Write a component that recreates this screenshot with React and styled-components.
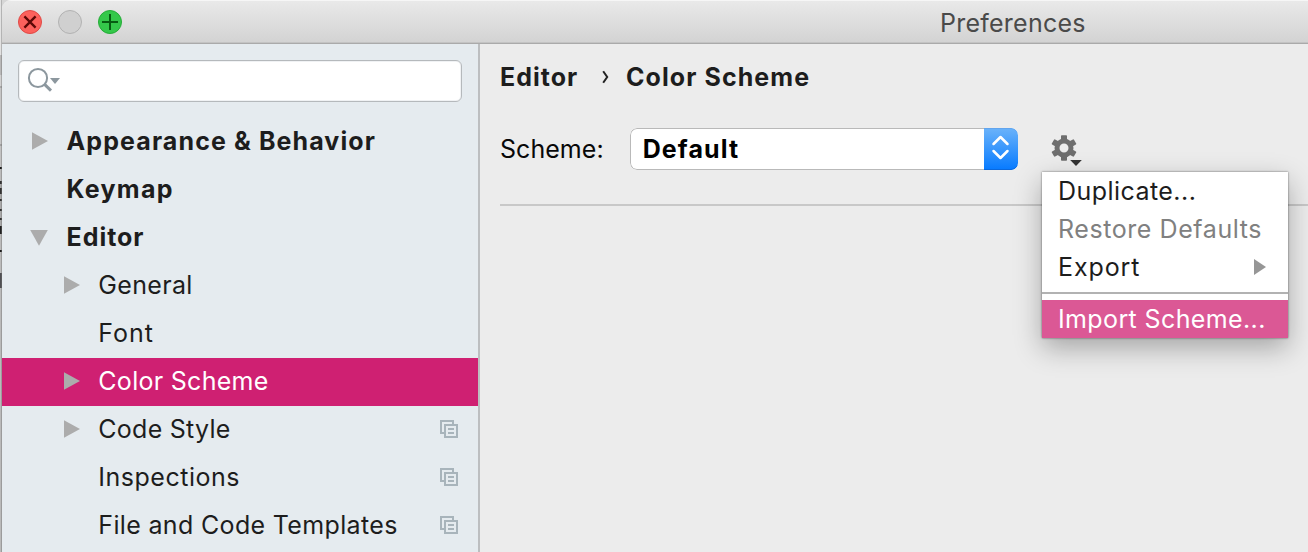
import React from "react";
import styled, { createGlobalStyle, css } from "styled-components";

const GlobalStyle = createGlobalStyle`
  * { box-sizing: border-box; }
  body {
    margin: 0;
    overflow: hidden;
    background: #ececec;
    font-family: Inter, "Liberation Sans", sans-serif;
    font-size: 25px;
    line-height: 30px;
    color: #1d1d1d;
  }
`;

const Screen = styled.div`
  display: flex;
  width: 1308px;
  height: 552px;
  overflow: hidden;
  background: #d6d6d6;
`;

/* Sliver of the window that lies behind the dialog. */
const BackgroundEdge = styled.div`
  flex: none;
  width: 2px;
  background:
    linear-gradient(90deg, transparent 50%, rgba(110, 110, 110, 0.4) 50%),
    linear-gradient(
      #e2e2e2 0 55px, #b9b9b9 55px 75px, #d2d2d2 75px 86px, #aaa 86px 88px,
      #c6c6c6 88px 144px, #a2a2a2 144px 146px, #c2c2c2 146px 167px,
      #1c1c1c 167px 169px, #bbb 169px 181px, #333 181px 184px, #aaa 184px 188px,
      #333 188px 194px, #aaa 194px 199px, #333 199px 201px, #aaa 201px 209px,
      #333 209px 211px, #aaa 211px 218px, #333 218px 220px, #aaa 220px 226px,
      #222 226px 234px, #bbb 234px 250px, #1c1c1c 250px 252px, #bbb 252px 273px,
      #505053 273px 288px, #bababa 288px
    );
`;

const Window = styled.div`
  flex: 1;
  min-width: 0;
  display: flex;
  flex-direction: column;
  background: #ececec;
  border-top-left-radius: 9px;
`;

const TitleBar = styled.header`
  flex: none;
  display: flex;
  align-items: center;
  height: 44px;
  padding: 0 0 0 16px;
  border-bottom: 1px solid #aaa;
  border-top-left-radius: 9px;
  background: linear-gradient(#f6f6f6 0 1px, #e9e9e9 1px, #d3d3d3 42px, #c3c3c3 42px);
`;

const WindowControls = styled.div`
  display: flex;
  gap: 16px;
  width: 922px;
`;

const Light = styled.span`
  display: flex;
  width: 24px;
  height: 24px;
  border-radius: 50%;
  border: 1px solid ${(p) => p.$edge};
  background: ${(p) => p.$fill};
`;

const Title = styled.h1`
  margin: 0;
  padding-top: 2px;
  font-size: 25px;
  font-weight: 400;
  letter-spacing: 0.24px;
  color: #4a4a4a;
`;

const Body = styled.div`
  flex: 1;
  min-height: 0;
  display: flex;
`;

const Sidebar = styled.aside`
  flex: none;
  width: 478px;
  padding-top: 16px;
  border-right: 2px solid #bcbec0;
  background: #e5ebef;
  overflow: hidden;
`;

const SearchField = styled.div`
  display: flex;
  width: 444px;
  height: 42px;
  margin: 0 0 16px 16px;
  padding: 5px 8px;
  border: 1px solid #b5b9bc;
  border-radius: 6px;
  background: #fff;
  box-shadow: inset 0 0 0 1px #f0f2f4;
`;

const TreeRow = styled.div`
  display: flex;
  align-items: center;
  height: 48px;
  padding: 0 20px 2px ${(p) => (p.$child ? 62 : 30)}px;
  ${(p) =>
    p.$selected &&
    css`
      background: #cf2072;
      color: #fff;
    `}
`;

const ArrowSlot = styled.span`
  display: flex;
  flex: none;
  width: ${(p) => (p.$child ? 34.3 : 34.6)}px;
`;

const DownArrow = styled.svg`
  margin: 1px 0 0 -2px;
`;

const TreeLabel = styled.span`
  flex: 1;
  white-space: nowrap;
  font-weight: ${(p) => (p.$bold ? 700 : 400)};
  letter-spacing: ${(p) => p.$track}px;
`;

const Content = styled.main`
  flex: 1;
  min-width: 0;
  padding: 18px 0 0 20px;
`;

const Breadcrumb = styled.nav`
  display: flex;
  align-items: center;
  height: 30px;
  font-weight: 700;
  white-space: nowrap;
`;

const Crumb = styled.span`
  letter-spacing: ${(p) => p.$track}px;
`;

const CrumbArrow = styled.svg`
  margin: 0 17.4px 0 23.4px;
`;

const SchemeRow = styled.div`
  display: flex;
  align-items: center;
  height: 42px;
  margin-top: 36px;
`;

const SchemeLabel = styled.label`
  width: 130px;
  color: #080808;
  letter-spacing: 0.04px;
`;

const Select = styled.div`
  display: flex;
  width: 388px;
  height: 42px;
  border-radius: 7px;
  overflow: hidden;
  background: #fff;
`;

const SelectValue = styled.span`
  flex: 1;
  padding: 5px 0 0 11.7px;
  border: 1px solid #b9b9b9;
  border-right: 0;
  border-radius: 7px 0 0 7px;
  font-weight: 700;
  letter-spacing: 1.1px;
  color: #000;
`;

const Stepper = styled.span`
  display: flex;
  width: 34px;
  border-radius: 0 7px 7px 0;
  background: linear-gradient(#6bb3fa, #067aff);
  box-shadow: inset 0 1px #62a5ee, inset 0 -1px #0a68dd;
`;

const GearButton = styled.div`
  position: relative;
  display: flex;
  width: 34px;
  height: 34px;
  margin-left: 32px;
`;

const Menu = styled.div`
  position: absolute;
  z-index: 2;
  top: 40px;
  left: -8px;
  width: 246px;
  background: #fff;
  box-shadow: 0 0 2px rgba(0, 0, 0, 0.55), 0 10px 26px rgba(0, 0, 0, 0.3);
`;

const MenuItem = styled.div`
  display: flex;
  align-items: center;
  justify-content: space-between;
  height: 38px;
  padding: 0 22px 0 16px;
  white-space: nowrap;
  letter-spacing: ${(p) => p.$track}px;
  color: ${(p) => (p.$active ? "#fff" : p.$disabled ? "#808080" : "#1d1d1d")};
  background: ${(p) => (p.$active ? "#db5895" : "transparent")};
`;

const MenuSeparator = styled.div`
  height: 2px;
  margin: 6px 0;
  background: #b2b2b2;
`;

const Rule = styled.div`
  height: 2px;
  margin-top: 34px;
  background: #c8c8c8;
`;

const TREE = [
  { label: "Appearance & Behavior", arrow: "right", bold: true, track: 1.1 },
  { label: "Keymap", bold: true, track: 1.25 },
  { label: "Editor", arrow: "down", bold: true, track: 0.95 },
  { label: "General", arrow: "right", child: true, track: 0.33 },
  { label: "Font", child: true, track: 0.95 },
  { label: "Color Scheme", arrow: "right", child: true, selected: true, track: 0.29 },
  { label: "Code Style", arrow: "right", child: true, shared: true, track: 0.26 },
  { label: "Inspections", child: true, shared: true, track: 0.52 },
  { label: "File and Code Templates", child: true, shared: true, track: 0.34 },
];

function TreeArrow({ dir }) {
  if (dir === "right")
    return (
      <svg width="16" height="18" viewBox="0 0 16 18">
        <path d="M0 0.3L16 9L0 17.7Z" fill="#acacac" />
      </svg>
    );
  if (dir === "down")
    return (
      <DownArrow width="18" height="16" viewBox="0 0 18 16">
        <path d="M0.2 0H17.8L9 15.7Z" fill="#acacac" />
      </DownArrow>
    );
  return null;
}

function ProjectIcon() {
  return (
    <svg width="18" height="18" viewBox="0 0 18 18" fill="none" stroke="#a8b4bb" strokeWidth="2">
      <path d="M4 13H1V1H13V4M5 5H17V17H5ZM8 9H14M8 13H14" />
    </svg>
  );
}

export default function App() {
  return (
    <Screen>
      <GlobalStyle />
      <BackgroundEdge />
      <Window>
        <TitleBar>
          <WindowControls>
            <Light $fill="#fc615c" $edge="#e04945">
              <svg width="22" height="22" viewBox="0 0 22 22">
                <path d="M5.4 5.4L16.6 16.6M16.6 5.4L5.4 16.6" stroke="#5c0806" strokeWidth="2.3" />
              </svg>
            </Light>
            <Light $fill="#d0d0d0" $edge="#b2b2b2" />
            <Light $fill="#34c84a" $edge="#25ac38">
              <svg width="22" height="22" viewBox="0 0 22 22">
                <path d="M3 11H19M11 3V19" stroke="#075d12" strokeWidth="2" />
              </svg>
            </Light>
          </WindowControls>
          <Title>Preferences</Title>
        </TitleBar>
        <Body>
          <Sidebar>
            <SearchField>
              <svg width="36" height="30" viewBox="0 0 36 30">
                <circle cx="11" cy="12" r="9.1" fill="none" stroke="#8c979e" strokeWidth="2" />
                <path d="M17.6 18.4L24 24.6" stroke="#8c979e" strokeWidth="3" />
                <path d="M23 12H33L28 18Z" fill="#8c979e" />
              </svg>
            </SearchField>
            {TREE.map((n) => (
              <TreeRow key={n.label} $child={n.child} $selected={n.selected}>
                <ArrowSlot $child={n.child}>
                  <TreeArrow dir={n.arrow} />
                </ArrowSlot>
                <TreeLabel $bold={n.bold} $track={n.track}>
                  {n.label}
                </TreeLabel>
                {n.shared && <ProjectIcon />}
              </TreeRow>
            ))}
          </Sidebar>
          <Content>
            <Breadcrumb>
              <Crumb $track={1}>Editor</Crumb>
              <CrumbArrow width="7" height="14" viewBox="0 0 7 14">
                <path d="M1.2 1.2L5.2 7L1.2 12.8" fill="none" stroke="#222" strokeWidth="2" />
              </CrumbArrow>
              <Crumb $track={1.08}>Color Scheme</Crumb>
            </Breadcrumb>
            <SchemeRow>
              <SchemeLabel>Scheme:</SchemeLabel>
              <Select>
                <SelectValue>Default</SelectValue>
                <Stepper>
                  <svg width="34" height="42" viewBox="0 0 34 42">
                    <path
                      d="M9.5 16L16.5 9L23.5 16M9.5 23L16.5 30L23.5 23"
                      fill="none"
                      stroke="#fff"
                      strokeWidth="2.5"
                      strokeLinecap="round"
                      strokeLinejoin="round"
                    />
                  </svg>
                </Stepper>
              </Select>
              <GearButton>
                <svg width="34" height="34" viewBox="0 0 34 34">
                  <g fill="#6e6e6e">
                    {[0, 60, 120, 180, 240, 300].map((a) => (
                      <rect
                        key={a}
                        x="11"
                        y="3.2"
                        width="6"
                        height="6"
                        rx="0.8"
                        transform={`rotate(${a} 14 16)`}
                      />
                    ))}
                  </g>
                  <circle cx="14" cy="16" r="7" fill="none" stroke="#6e6e6e" strokeWidth="5" />
                  <path d="M20.2 28H31.8L26 34Z" fill="#333" />
                </svg>
                <Menu>
                  <MenuItem $track={0.45}>Duplicate...</MenuItem>
                  <MenuItem $track={0.57} $disabled>
                    Restore Defaults
                  </MenuItem>
                  <MenuItem $track={0.9}>
                    Export
                    <svg width="12" height="16" viewBox="0 0 12 16">
                      <path d="M0 0L12 8L0 16Z" fill="#969696" />
                    </svg>
                  </MenuItem>
                  <MenuSeparator />
                  <MenuItem $track={0.38} $active>
                    Import Scheme...
                  </MenuItem>
                </Menu>
              </GearButton>
            </SchemeRow>
            <Rule />
          </Content>
        </Body>
      </Window>
    </Screen>
  );
}
